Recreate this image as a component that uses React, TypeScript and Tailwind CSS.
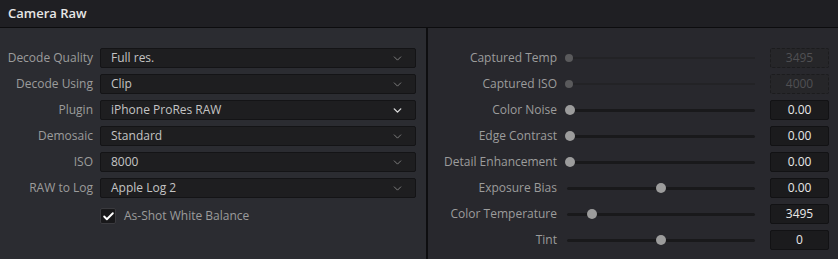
import { ChevronDown, Check } from "lucide-react";

const decodeRows = [
  { label: "Decode Quality", value: "Full res.", strong: false },
  { label: "Decode Using", value: "Clip", strong: false },
  { label: "Plugin", value: "iPhone ProRes RAW", strong: true },
  { label: "Demosaic", value: "Standard", strong: false },
  { label: "ISO", value: "8000", strong: false },
  { label: "RAW to Log", value: "Apple Log 2", strong: false },
];

const sliderRows = [
  { label: "Captured Temp", pos: 0, value: "3495", disabled: true },
  { label: "Captured ISO", pos: 0, value: "4000", disabled: true },
  { label: "Color Noise", pos: 0, value: "0.00", disabled: false },
  { label: "Edge Contrast", pos: 0, value: "0.00", disabled: false },
  { label: "Detail Enhancement", pos: 0, value: "0.00", disabled: false },
  { label: "Exposure Bias", pos: 0.5, value: "0.00", disabled: false },
  { label: "Color Temperature", pos: 0.12, value: "3495", disabled: false },
  { label: "Tint", pos: 0.5, value: "0", disabled: false },
];

function Dropdown({ value, strong }: { value: string; strong: boolean }) {
  return (
    <div className="flex h-[20px] w-[316px] items-center justify-between rounded-[2px] border border-[#141416] bg-[#1e1e20] pl-[10px] pr-[11px] text-[#c4c4c4]">
      <span>{value}</span>
      <ChevronDown
        size={13}
        strokeWidth={strong ? 2.6 : 1.6}
        className={strong ? "text-[#d8d8d8]" : "text-[#8a8a8a]"}
      />
    </div>
  );
}

function Slider({ pos, disabled }: { pos: number; disabled: boolean }) {
  return (
    <div className="relative flex h-[20px] w-[192px] items-center">
      <div
        className={
          disabled
            ? "mx-[2px] h-[2px] w-full bg-[#232326]"
            : "mx-[2px] h-[3px] w-full rounded-full bg-[#19191b]"
        }
      />
      <div
        className={
          disabled
            ? "absolute top-[6px] h-[8px] w-[8px] rounded-full bg-[#5a5a5c]"
            : "absolute top-[5px] h-[10px] w-[10px] rounded-full bg-[#9c9c9c]"
        }
        style={{ left: `${pos * 182}px` }}
      />
    </div>
  );
}

export default function App() {
  return (
    <div
      className="h-[259px] w-[838px] overflow-hidden bg-[#28282d] text-[12px]"
      style={{ fontFamily: '"Open Sans", "Noto Sans", sans-serif' }}
    >
      <div className="flex h-[28px] items-center border-b border-[#0c0c0e] bg-[#1f1f23] pl-[8px] text-[13px] font-semibold text-[#e6e6e6]">
        Camera Raw
      </div>
      <div className="flex h-[231px]">
        <div className="flex w-[428px] flex-col gap-[6px] border-r-2 border-[#0e0e10] bg-[#2b2c31] pt-[20px]">
          {decodeRows.map((row) => (
            <div key={row.label} className="flex h-[20px] items-center">
              <div className="w-[93px] text-right text-[#9c9c9c]">{row.label}</div>
              <div className="ml-[7px]">
                <Dropdown value={row.value} strong={row.strong} />
              </div>
            </div>
          ))}
          <div className="mt-[4px] flex h-[16px] items-center pl-[100px]">
            <div className="flex h-[16px] w-[16px] items-center justify-center rounded-[2px] border border-[#3a3a3e] bg-[#18181a]">
              <Check size={13} strokeWidth={3.5} className="text-white" />
            </div>
            <span className="ml-[8px] text-[#9c9c9c]">As-Shot White Balance</span>
          </div>
        </div>
        <div className="flex flex-1 flex-col gap-[6px] pt-[20px]">
          {sliderRows.map((row) => (
            <div key={row.label} className="flex h-[20px] items-center">
              <div className="w-[129px] text-right text-[#9c9c9c]">{row.label}</div>
              <div className="ml-[8px]">
                <Slider pos={row.pos} disabled={row.disabled} />
              </div>
              <div
                className={
                  row.disabled
                    ? "ml-[13px] flex h-[20px] w-[59px] items-center justify-center rounded-[2px] border border-dashed border-[#1c1c1e] bg-[#262629] text-[#505053]"
                    : "ml-[13px] flex h-[20px] w-[59px] items-center justify-center rounded-[2px] border border-[#121214] bg-[#1b1b1d] text-[#e8e8e8]"
                }
              >
                {row.value}
              </div>
            </div>
          ))}
        </div>
      </div>
    </div>
  );
}
